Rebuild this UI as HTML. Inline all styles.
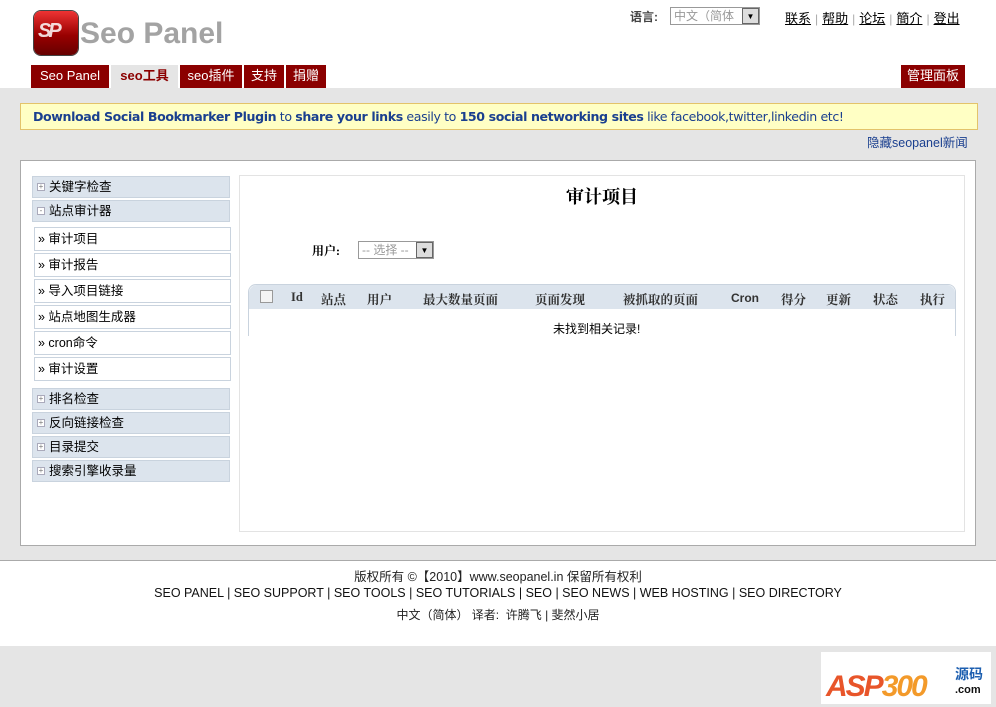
<!DOCTYPE html>
<html><head><meta charset="utf-8">
<style>
*{margin:0;padding:0;box-sizing:border-box}
body{width:996px;height:707px;position:relative;background:#e5e5e5;font-family:"Liberation Sans","Noto Sans CJK SC",sans-serif;font-size:12px;color:#000;overflow:hidden}
.a{position:absolute}
.hdr{left:0;top:0;width:996px;height:88px;background:#fff}
.tab{position:absolute;top:65px;height:23px;background:#8b0000;color:#fff;font-size:13px;line-height:22px;text-align:center}
.links a{color:#000;text-decoration:underline;font-size:13px}
.links span{color:#aaa;margin:0 4px}
.menu{position:absolute;left:32px;width:198px;height:22px;background:#dce4ed;border:1px solid #c9d3de;font-size:12.5px;line-height:20px;padding-left:16px}
.menu i{position:absolute;left:4px;top:6px;width:8px;height:8px;border:1px solid #aab;font-style:normal;font-size:8px;line-height:6px;text-align:center;color:#777;background:#fff}
.sub{position:absolute;left:34px;width:197px;height:24px;background:#fff;border:1px solid #c9d3de;font-size:12.5px;line-height:22px;padding-left:3px}
.th{position:absolute;top:290px;font-weight:bold;font-size:12.5px;font-family:"Liberation Serif","Noto Serif CJK SC",serif;color:#333}
</style></head><body>
<div class="a hdr"></div>
<div class="a" style="left:34px;top:11px;width:44px;height:44px;border-radius:7px;background:linear-gradient(#e33,#900 55%,#600);box-shadow:0 0 0 1px #444"></div>
<div class="a" style="left:38px;top:20px;color:#fff;font:italic bold 20px 'Liberation Sans';letter-spacing:-3px;opacity:.85">SP</div>
<div class="a" style="left:80px;top:17px;font:bold 30px 'Liberation Sans';color:#a3a3a3">Seo Panel</div>
<div class="tab" style="left:31px;width:78px">Seo Panel</div>
<div class="tab" style="left:111px;width:67px;background:#e5e5e5;color:#8b0000;font-weight:bold">seo工具</div>
<div class="tab" style="left:180px;width:62px">seo插件</div>
<div class="tab" style="left:244px;width:40px">支持</div>
<div class="tab" style="left:286px;width:40px">捐赠</div>
<div class="tab" style="left:901px;width:64px">管理面板</div>
<div class="a" style="left:630px;top:8px;font-weight:bold;font-size:12px;color:#444">语言:</div>
<div class="a" style="left:670px;top:7px;width:90px;height:18px;border:1px solid #999;background:#fff;color:#999;font-size:12px;line-height:16px;padding-left:3px">中文（简体</div>
<div class="a" style="left:742px;top:8px;width:17px;height:16px;background:#ddd;border:1px solid #666;font-size:8px;text-align:center;line-height:15px">▼</div>
<div class="a links" style="left:785px;top:8px"><a>联系</a><span>|</span><a>帮助</a><span>|</span><a>论坛</a><span>|</span><a>簡介</a><span>|</span><a>登出</a></div>
<div class="a" style="left:20px;top:103px;width:958px;height:27px;background:#ffffc4;border:1px solid #e3c36a;font:12.6px 'DejaVu Sans',sans-serif;color:#1a3f8f;line-height:25px;padding-left:12px;white-space:nowrap;letter-spacing:-.4px"><b>Download Social Bookmarker Plugin</b> to <b>share your links</b> easily to <b>150 social networking sites</b> like facebook,twitter,linkedin etc!</div>
<div class="a" style="left:867px;top:132px;font-size:12.5px;color:#1a3f8f">隐藏seopanel新闻</div>
<div class="a" style="left:20px;top:160px;width:956px;height:386px;background:#fff;border:1px solid #aaa"></div>
<div class="menu" style="top:176px"><i>+</i>关键字检查</div>
<div class="menu" style="top:200px"><i>-</i>站点审计器</div>
<div class="sub" style="top:227px">» 审计项目</div>
<div class="sub" style="top:253px">» 审计报告</div>
<div class="sub" style="top:279px">» 导入项目链接</div>
<div class="sub" style="top:305px">» 站点地图生成器</div>
<div class="sub" style="top:331px">» cron命令</div>
<div class="sub" style="top:357px">» 审计设置</div>
<div class="menu" style="top:388px"><i>+</i>排名检查</div>
<div class="menu" style="top:412px"><i>+</i>反向链接检查</div>
<div class="menu" style="top:436px"><i>+</i>目录提交</div>
<div class="menu" style="top:460px"><i>+</i>搜索引擎收录量</div>
<div class="a" style="left:239px;top:175px;width:726px;height:357px;border:1px solid #e3e3e3"></div>
<div class="a" style="left:239px;top:183px;width:726px;text-align:center;font:bold 18px 'Liberation Serif','Noto Serif CJK SC',serif">审计项目</div>
<div class="a" style="left:312px;top:242px;font-weight:bold;font-family:'Liberation Serif','Noto Serif CJK SC',serif">用户:</div>
<div class="a" style="left:358px;top:241px;width:76px;height:18px;border:1px solid #999;color:#999;line-height:16px;padding-left:3px">-- 选择 --</div>
<div class="a" style="left:416px;top:242px;width:17px;height:16px;background:#ddd;border:1px solid #666;font-size:8px;text-align:center;line-height:15px">▼</div>
<div class="a" style="left:248px;top:284px;width:708px;height:52px;border:1px solid #c9d3de;border-bottom:none;border-radius:8px 8px 0 0"></div>
<div class="a" style="left:249px;top:285px;width:706px;height:24px;background:#dce4ed;border-radius:8px 8px 0 0"></div>
<div class="a" style="left:260px;top:290px;width:13px;height:13px;border:1px solid #999;background:#f4f4f4"></div>
<div class="th" style="left:291px">Id</div>
<div class="th" style="left:321px">站点</div>
<div class="th" style="left:367px">用户</div>
<div class="th" style="left:423px">最大数量页面</div>
<div class="th" style="left:535px">页面发现</div>
<div class="th" style="left:623px">被抓取的页面</div>
<div class="th" style="left:731px;font-family:'Liberation Sans';font-size:12px;top:291px">Cron</div>
<div class="th" style="left:781px">得分</div>
<div class="th" style="left:826px">更新</div>
<div class="th" style="left:873px">状态</div>
<div class="th" style="left:920px">执行</div>
<div class="a" style="left:553px;top:320px">未找到相关记录!</div>
<div class="a" style="left:0;top:560px;width:996px;height:86px;background:#fff;border-top:1px solid #aaa"></div>
<div class="a" style="left:0;top:566px;width:996px;text-align:center;font-size:12.5px;color:#222">版权所有 ©【2010】www.seopanel.in 保留所有权利</div>
<div class="a" style="left:0;top:586px;width:996px;text-align:center;font-size:12.5px;color:#111;white-space:nowrap">SEO PANEL | SEO SUPPORT | SEO TOOLS | SEO TUTORIALS | SEO | SEO NEWS | WEB HOSTING | SEO DIRECTORY</div>
<div class="a" style="left:0;top:606px;width:996px;text-align:center;font-size:12px;color:#222">中文（简体） 译者: &nbsp;许腾飞 | 斐然小居</div>
<div class="a" style="left:821px;top:652px;width:170px;height:52px;background:#fff"></div>
<div class="a" style="left:826px;top:670px;font:italic bold 30px 'Liberation Sans';color:#e8552a;letter-spacing:-2px">ASP<span style="color:#f39a2a">300</span></div>
<div class="a" style="left:955px;top:664px;font-size:14px;font-weight:bold;color:#1d5fb0">源码</div>
<div class="a" style="left:955px;top:684px;font-size:11px;font-weight:bold;color:#111">.com</div>
</body></html>
